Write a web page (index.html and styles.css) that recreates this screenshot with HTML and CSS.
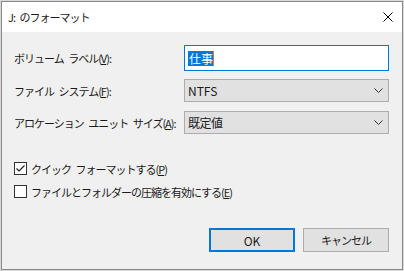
FILE: index.html
```html
<!DOCTYPE html>
<html lang="ja">
<head>
    <meta charset="UTF-8">
    <meta name="viewport" content="width=device-width, initial-scale=1.0">
    <title>J: のフォーマット</title>
    <link rel="stylesheet" href="styles.css">
</head>
<body>
    <div class="dialog">
        <!-- Title bar -->
        <div class="title-bar">
            <span class="title">J: のフォーマット</span>
            <svg class="close-icon" width="10" height="10" viewBox="0 0 10 10">
                <path d="M0.5 0.5 L9.5 9.5 M9.5 0.5 L0.5 9.5" stroke="#000" stroke-width="1" fill="none"/>
            </svg>
        </div>

        <div class="dialog-body">
            <div class="form-row first">
                <label class="field-label">ボリューム ラベル(<u>V</u>):</label>
                <div class="text-box">
                    <span class="selected-text">仕事</span><span class="caret"></span>
                </div>
            </div>

            <div class="form-row">
                <label class="field-label">ファイル システム(<u>F</u>):</label>
                <div class="combo-box">
                    <span class="latin">NTFS</span>
                    <svg class="chevron" width="9" height="5" viewBox="0 0 9 5">
                        <path d="M0.5 0.5 L4.5 4.5 L8.5 0.5" stroke="#333" stroke-width="1" fill="none"/>
                    </svg>
                </div>
            </div>

            <div class="form-row">
                <label class="field-label">アロケーション ユニット サイズ(<u>A</u>):</label>
                <div class="combo-box">
                    <span class="value-text">既定値</span>
                    <svg class="chevron" width="9" height="5" viewBox="0 0 9 5">
                        <path d="M0.5 0.5 L4.5 4.5 L8.5 0.5" stroke="#333" stroke-width="1" fill="none"/>
                    </svg>
                </div>
            </div>

            <div class="options">
                <div class="check-row">
                    <span class="check-box">
                        <svg width="11" height="11" viewBox="0 0 11 11">
                            <path d="M1.5 5.5 L4 8 L9.5 2.5" stroke="#222" stroke-width="1.2" fill="none"/>
                        </svg>
                    </span>
                    <span>クイック フォーマットする(<u>P</u>)</span>
                </div>
                <div class="check-row">
                    <span class="check-box"></span>
                    <span>ファイルとフォルダーの圧縮を有効にする(<u>E</u>)</span>
                </div>
            </div>

            <div class="button-row">
                <button class="dlg-button default"><span class="latin">OK</span></button>
                <button class="dlg-button">キャンセル</button>
            </div>
        </div>
    </div>
</body>
</html>
```

FILE: styles.css
```css
body {
    margin: 0;
    padding: 1px 0 0 1px;
    background: #d8d8d8;
    font-family: "Noto Sans CJK JP", "Noto Sans", sans-serif;
    font-size: 11px;
    letter-spacing: -1px;
    word-spacing: 3px;
    line-height: 16px;
    color: #1a1a1a;
}

.latin {
    font-size: 12px;
    letter-spacing: 0;
}

.dialog {
    width: 400px;
    height: 267px;
    border: 1px solid #8a8a8a;
    background: #f0f0f0;
    display: flex;
    flex-direction: column;
}

.title-bar {
    height: 30px;
    background: #fff;
    display: flex;
    align-items: center;
    justify-content: space-between;
    padding: 0 9px 0 6px;
}

.dialog-body {
    flex: 1;
    padding: 13px 13px 0 12px;
    display: flex;
    flex-direction: column;
}

.form-row {
    display: flex;
    align-items: center;
    margin-top: 9px;
}

.form-row.first {
    margin-top: 0;
    margin-bottom: -1px;
}

.field-label {
    width: 170px;
    flex-shrink: 0;
    white-space: nowrap;
}

.text-box {
    flex: 1;
    height: 26px;
    box-sizing: border-box;
    border: 1px solid #0078d7;
    background: #fff;
    display: flex;
    align-items: center;
    padding-left: 3px;
}

.selected-text {
    background: #0078d7;
    color: #fff;
    font-size: 12px;
    letter-spacing: 0;
    line-height: 15px;
    padding: 0 0 0 1px;
}

.caret {
    width: 1px;
    height: 15px;
    background: #e8761e;
}

.combo-box {
    flex: 1;
    height: 23px;
    box-sizing: border-box;
    border: 1px solid #adadad;
    background: #e1e1e1;
    display: flex;
    align-items: center;
    justify-content: space-between;
    padding: 0 5px 0 3px;
}

.value-text {
    font-size: 12px;
    letter-spacing: -0.5px;
}

.options {
    margin-top: 23px;
    display: flex;
    flex-direction: column;
}

.check-row {
    display: flex;
    align-items: center;
    height: 23px;
    gap: 4px;
}

.check-box {
    width: 13px;
    height: 13px;
    box-sizing: border-box;
    border: 1px solid #333;
    background: #fff;
    display: flex;
    align-items: center;
    justify-content: center;
}

.button-row {
    margin-top: 25px;
    display: flex;
    justify-content: flex-end;
    gap: 8px;
}

.dlg-button {
    width: 86px;
    height: 24px;
    box-sizing: border-box;
    border: 1px solid #adadad;
    background: #e1e1e1;
    font-family: inherit;
    font-size: 11px;
    letter-spacing: -1px;
    padding: 0;
    color: #1a1a1a;
}

.dlg-button.default {
    border: 2px solid #0078d7;
}
```
